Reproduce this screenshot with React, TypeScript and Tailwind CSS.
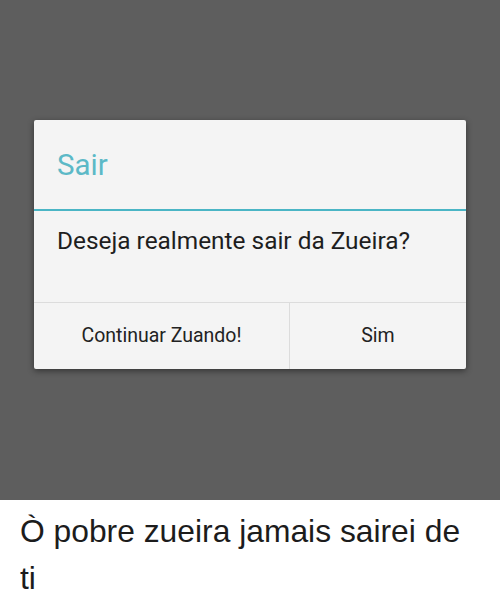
import React from "react";

export default function App() {
  return (
    <div className="w-[500px] h-[610px] bg-white overflow-hidden">
      <div className="h-[500px] bg-[#5e5e5e] pt-[120px] px-[34px]">
        <div
          className="bg-[#f4f4f4] rounded-[2px] shadow-[0_2px_6px_rgba(0,0,0,0.45)] flex flex-col"
          style={{ fontFamily: "Roboto, 'Noto Sans', sans-serif" }}
        >
          <div className="h-[89px] pt-[29px] pl-[23px]">
            <div className="text-[29.5px] leading-[32px] text-[#5cb9c7]">Sair</div>
          </div>
          <div className="h-[2px] bg-[#4ab5c5]" />
          <div className="h-[91px] pt-[16px] pl-[23px]">
            <div className="text-[24.4px] leading-[28px] text-[#1e1e1e]">
              Deseja realmente sair da Zueira?
            </div>
          </div>
          <div className="h-[67px] flex border-t border-[#dcdcdc]">
            <div className="w-[256px] flex items-center justify-center border-r border-[#dcdcdc] text-[19.5px] text-[#222]">
              Continuar Zuando!
            </div>
            <div className="flex-1 flex items-center justify-center text-[19.5px] text-[#222]">
              Sim
            </div>
          </div>
        </div>
      </div>
      <div
        className="pt-[8px] pl-[20px] pr-[20px] text-[31.8px] leading-[47px] text-[#1c1c1c]"
        style={{ fontFamily: "'Liberation Sans', Arial, sans-serif" }}
      >
        Ò pobre zueira jamais sairei de ti
      </div>
    </div>
  );
}
